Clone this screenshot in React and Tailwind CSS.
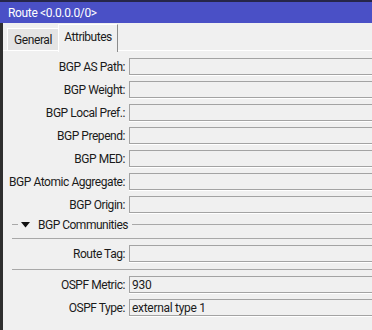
import React from 'react';

const fields1 = [
    { label: 'BGP AS Path:' },
    { label: 'BGP Weight:' },
    { label: 'BGP Local Pref.:' },
    { label: 'BGP Prepend:' },
    { label: 'BGP MED:' },
    { label: 'BGP Atomic Aggregate:' },
    { label: 'BGP Origin:' },
];

const Field = ({ label, value, last }) => (
    <div className={`flex items-center h-[17px] ${last ? '' : 'mb-[6px]'}`}>
        <div className="w-[126px] shrink-0 text-right pr-[4px] text-[12px] tracking-[-0.45px] leading-none text-[#1b1b1b] whitespace-nowrap">
            {label}
        </div>
        <div className="flex-1 h-[17px] -mr-[10px] border border-[#a3a3a3] bg-[#f0f0f0] shadow-[0_1px_0_#ffffff] flex items-center pl-[2px] text-[12px] tracking-[-0.3px] leading-none text-[#1b1b1b] whitespace-nowrap">
            {value}
        </div>
    </div>
);

const Separator = () => (
    <div className="ml-[9px] h-px bg-[#a8a8a8]" />
);

const App = () => {
    return (
        <div
            className="w-[372px] h-[330px] overflow-hidden bg-[#f0f0f0] flex flex-col"
            style={{ fontFamily: 'Roboto, "Liberation Sans", Arial, sans-serif' }}
        >
            {/* Title bar */}
            <div className="h-[23px] shrink-0 border-t-2 border-[#26264a] bg-[#4a50c6] flex items-center pl-[8px]">
                <span className="text-[12px] tracking-[-0.35px] leading-none text-white">Route &lt;0.0.0.0/0&gt;</span>
            </div>

            <div className="flex-1 flex border-l-[3px] border-[#2e2e2e]">
                <div className="flex-1 flex flex-col">
                    {/* Tabs */}
                    <div className="h-[28px] shrink-0 flex items-end">
                        <div className="w-[4px] h-px bg-white" />
                        <div className="w-[51px] h-[23px] bg-[#e4e4e4] border-t border-l border-[#ffffff] border-b border-b-white flex items-center justify-center text-[12px] tracking-[-0.4px] leading-none text-[#1b1b1b]">
                            General
                        </div>
                        <div className="w-[60px] h-[28px] -mb-px bg-[#f0f0f0] border-t border-l border-white border-r border-r-[#8c8c8c] flex items-center justify-center pb-[3px] text-[12px] tracking-[-0.5px] leading-none text-[#1b1b1b]">
                            Attributes
                        </div>
                        <div className="flex-1 h-px bg-white" />
                    </div>

                    {/* Page */}
                    <div className="pt-[7px] flex flex-col">
                        {fields1.map((f, i) => (
                            <Field key={f.label} label={f.label} last={i === fields1.length - 1} />
                        ))}

                        {/* BGP Communities group header */}
                        <div className="mt-[3px] h-[17px] flex items-center">
                            <div className="ml-[9px] w-[6px] h-px bg-[#a8a8a8]" />
                            <svg width="9" height="6" viewBox="0 0 9 6" className="ml-[3px]">
                                <path d="M0 0 H9 L4.5 5.5 Z" fill="#111111" />
                            </svg>
                            <span className="ml-[8px] text-[12px] tracking-[-0.5px] leading-none text-[#1b1b1b] whitespace-nowrap">BGP Communities</span>
                            <div className="ml-[4px] flex-1 h-px bg-[#a8a8a8]" />
                        </div>

                        <div className="mt-[5px]">
                            <Separator />
                        </div>

                        <div className="mt-[6px]">
                            <Field label="Route Tag:" last />
                        </div>

                        <div className="mt-[7px]">
                            <Separator />
                        </div>

                        <div className="mt-[6px]">
                            <Field label="OSPF Metric:" value="930" />
                            <Field label="OSPF Type:" value="external type 1" last />
                        </div>
                    </div>
                </div>
            </div>
        </div>
    );
};

export default App;
